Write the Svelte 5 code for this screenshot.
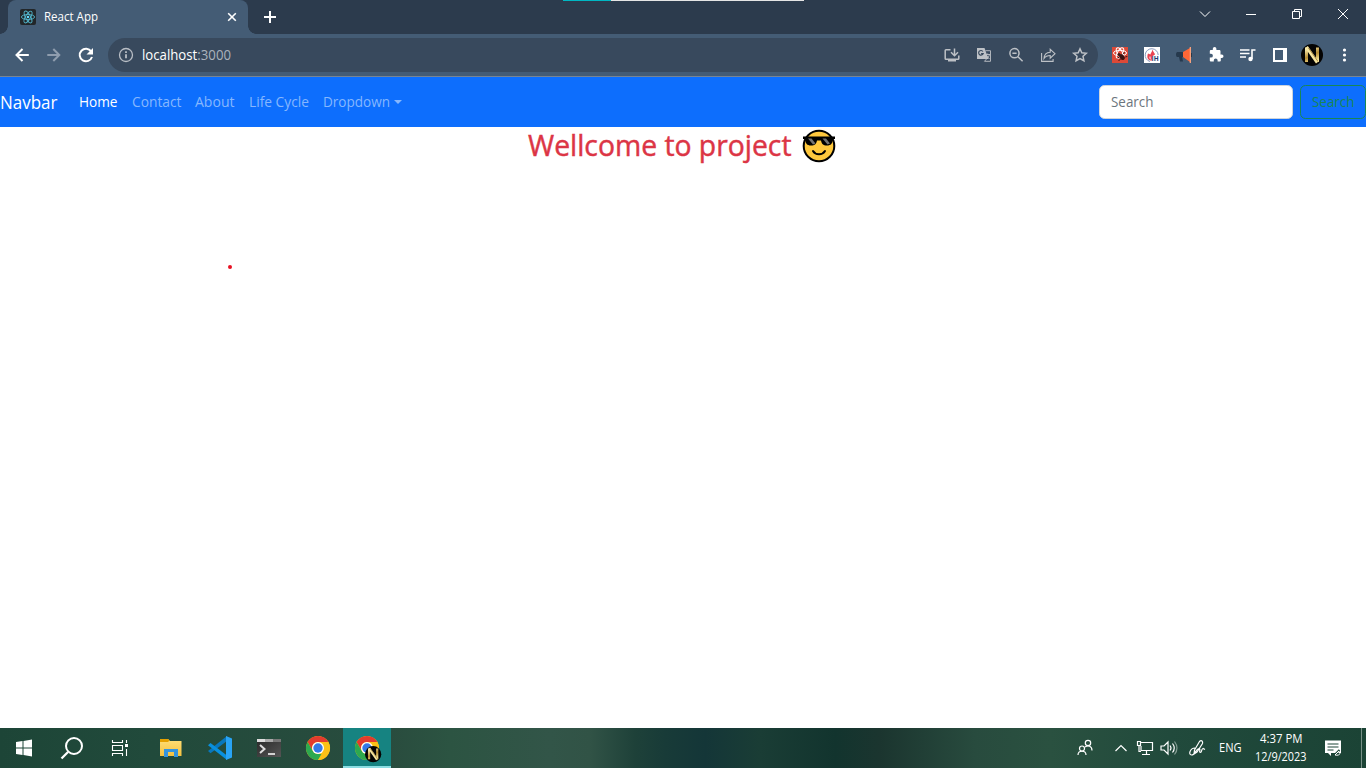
<script>
  const links = [
    { label: 'Home', width: 38.5, active: true },
    { label: 'Contact', width: 49.5 },
    { label: 'About', width: 39.5 },
    { label: 'Life Cycle', width: 60 },
    { label: 'Dropdown', width: 67, caret: true }
  ];
</script>

{#snippet label(text, width, size, base, weight = 400)}
  <svg class="label" {width} height={size * 1.5} aria-label={text}>
    <text x="0" y={base} textLength={width} lengthAdjust="spacingAndGlyphs" font-size={size} font-weight={weight}>{text}</text>
  </svg>
{/snippet}

{#snippet badge()}
  <circle cx="11" cy="11" r="11" fill="#050403" />
  <path d="M5.5 18V3.500M16.500 3.500V18" stroke="url(#gold)" stroke-width="3" />
  <path d="M5.500 3 16.300 18.500" stroke="#f7e5a0" stroke-width="3.200" />
  <path d="M7.500 4 17 17.500" stroke="#86621c" stroke-width=".7" />
{/snippet}

{#snippet chrome()}
  <circle cx="12" cy="12" r="12" fill="#fbc116" />
  <path d="M1.6 6A12 12 0 0 1 22.4 6H12a6 6 0 0 0-5.2 9z" fill="#e33b2e" />
  <path d="M1.6 6 6.8 15A6 6 0 0 0 12 18h5.2l-5.2 6A12 12 0 0 1 1.6 6z" fill="#2da94f" />
  <path d="M12 24 17.2 15A6 6 0 0 0 17.2 9L22.4 6A12 12 0 0 1 12 24z" fill="#fbc116" />
  <circle cx="12" cy="12" r="6" fill="#fff" />
  <circle cx="12" cy="12" r="4.7" fill="#3479e7" />
{/snippet}

<svg class="defs" width="0" height="0">
  <defs>
    <linearGradient id="gold" gradientUnits="userSpaceOnUse" x1="5" x2="12" y1="4" y2="19">
      <stop offset="0" stop-color="#fff5bb" /><stop offset=".55" stop-color="#b58a30" /><stop offset="1" stop-color="#fff0a2" />
    </linearGradient>
    <linearGradient id="folder" x2="0" y2="1"><stop stop-color="#ffdf78" /><stop offset="1" stop-color="#f5c13f" /></linearGradient>
    <linearGradient id="term" x2="1" y2="1"><stop stop-color="#292929" /><stop offset="1" stop-color="#555" /></linearGradient>
  </defs>
</svg>

<div class="screen">
  <header class="titlebar">
    <div class="tab">
      <svg class="react" width="16" height="16" viewBox="0 0 16 16">
        <rect width="16" height="16" rx="2" fill="#222629" />
        <g fill="none" stroke="#52b5cb" stroke-width=".9">
          <ellipse cx="8" cy="8" rx="6.6" ry="2.5" />
          <ellipse cx="8" cy="8" rx="6.6" ry="2.5" transform="rotate(60 8 8)" />
          <ellipse cx="8" cy="8" rx="6.6" ry="2.5" transform="rotate(120 8 8)" />
        </g>
        <circle cx="8" cy="8" r="1.3" fill="#61dafb" />
      </svg>
      {@render label('React App', 54, 12, 13)}
      <svg class="close" width="16" height="16" viewBox="0 0 16 16"><path d="m4.2 4.2 7.6 7.6m0-7.6-7.6 7.6" stroke="#fff" stroke-width="1.6" /></svg>
    </div>
    <svg class="plus" width="44" height="34" viewBox="0 0 44 34"><path d="M22 11v12M16 17h12" stroke="#fff" stroke-width="2" /></svg>
    <div class="window">
      <svg viewBox="0 0 46 28"><path d="m18 11.5 5 5 5-5" /></svg>
      <svg viewBox="0 0 46 28"><path d="M18 14.5h10" /></svg>
      <svg viewBox="0 0 46 28"><path d="M18.5 11.5h7v7h-7zM20.5 11.5v-2h7v7h-2" /></svg>
      <svg viewBox="0 0 46 28"><path d="m18 9 10 10m0-10L18 19" /></svg>
    </div>
    <div class="progress"></div>
  </header>

  <div class="toolbar">
    <div class="history">
      <svg viewBox="0 0 32 32"><path d="M22.8 16H10.5m6-6-6 6 6 6" stroke="#fff" stroke-width="2" /></svg>
      <svg viewBox="0 0 32 32"><path d="M9.3 16h12m-6-6 6 6-6 6" stroke="#8f9dae" stroke-width="2" /></svg>
      <svg viewBox="0 0 32 32"><path d="M21.2 12.4A6.3 6.3 0 1 0 22 18" stroke="#fff" stroke-width="2" /><path d="M23 9v6.5h-6.5z" fill="#fff" /></svg>
    </div>
    <div class="address">
      <svg class="info" width="16" height="16" viewBox="0 0 16 16"><circle cx="8" cy="8" r="6.5" fill="none" stroke="#b9bec5" stroke-width="1.3" /><path d="M8 7.3v4M8 4.3v1.6" stroke="#c9cdd2" stroke-width="1.6" /></svg>
      <svg class="label" width="89" height="22" aria-label="localhost:3000"><text x="0" y="16" font-size="14" textLength="89" lengthAdjust="spacingAndGlyphs">localhost<tspan fill="#aab2bc">:3000</tspan></text></svg>
      <div class="actions">
        <svg viewBox="0 0 32 32"><path d="M14.5 10.7H10q-.8 0-.8.8v8q0 .8.8.8h12q.8 0 .8-.8v-3M18.5 9.5v7m-3.5-3.3 3.5 3.5 3.5-3.5" /><path d="M12 20h8v2.5h-8z" fill="#bdc1c6" stroke="none" /></svg>
        <svg viewBox="0 0 32 32"><path d="M9 9h7.500l4 11H9z" fill="#bdc1c6" stroke="none" /><path d="M17.500 11.700h5v10.600h-6l2-2.300M17.500 15.500h4.500m-2.300-1v1M21.500 15.500c-.5 2-1.500 3-2.500 4m-.2-2.500 2.700 3" stroke-width=".9" /><path d="M14.900 12.500a2.300 2.300 0 1 0 .2 2.200h-2" stroke="#38495d" stroke-width="1.200" /></svg>
        <svg viewBox="0 0 32 32"><circle cx="14.5" cy="14.2" r="4.6" /><path d="m18 17.7 4.6 4.6M12.4 14.2h4.2" /></svg>
        <svg viewBox="0 0 32 32"><path d="M9.600 14v8.400h11.500v-2.500M12 19.500c.3-4 2.700-6 6.200-6.200v-3l4.800 4.400-4.800 4.500v-2.700c-2.800 0-4.700.8-6.200 3z" stroke-width="1.1" /></svg>
        <svg viewBox="0 0 32 32"><path d="m16 9.8 1.8 4 4.5.5-3.3 3 .9 4.4-3.9-2.2-3.9 2.2.9-4.4-3.3-3 4.5-.5z" /></svg>
      </div>
    </div>
    <div class="extensions">
      <svg viewBox="0 0 32 32"><path d="M8 8h16v16H8z" fill="#dc4937" /><g fill="none" stroke="#fff" stroke-width="1"><ellipse cx="16" cy="14" rx="6.500" ry="2.700" /><ellipse cx="16" cy="14" rx="5.800" ry="2.500" transform="rotate(60 16 14)" /><ellipse cx="16" cy="14" rx="5.800" ry="2.500" transform="rotate(120 16 14)" /></g><circle cx="15" cy="15.500" r="1.500" fill="#3b1715" /><ellipse cx="18" cy="18" rx="2.300" ry="3.300" fill="#381312" transform="rotate(-40 18 18)" /><path d="m13.500 19 2-1m-1 4 2-2m3-5 .8-2m1 5 2-.5" stroke="#381312" /></svg>
      <svg viewBox="0 0 32 32"><path d="M8 8h16v16H8z" fill="#fff" /><path d="M14 22.500a6.500 6.500 0 1 1 8.200-6.500" fill="none" stroke="#8899bd" stroke-width="1" /><path d="M16.500 10.500c-.5 3-2 3.500-2 5l-2.500-1c-2 5 1 7.500 4 7v-4l3-2c-.4-2-2-2.500-2.500-5z" fill="#ea4350" /><path d="M14 17.500q-.5 2 1 3" stroke="#fff" fill="none" /><text x="15.500" y="22" font-size="6.500" font-weight="700" fill="#213a71">IH</text></svg>
      <svg viewBox="0 0 32 32"><path d="M9 13h6.500v5h-1.300l.8 4.500h-3l-1-4.500H9q-1-.5-1-2.500t1-2.500z" fill="#26394d" /><path d="m15 13 7-4v14l-7-5z" fill="#ff6737" /><path d="M21.700 8h1.300v16h-1.300z" fill="#f6a17d" /><path d="M23.500 14v4" stroke="#29394a" /></svg>
      <svg viewBox="0 0 32 32"><path d="M20.7 15.3h-1.2V12c0-.8-.6-1.3-1.3-1.3h-2.8V9.500a1.800 1.800 0 0 0-3.600 0v1.200h-2q-1 0-1 1v2.800H10a1.900 1.900 0 0 1 0 3.800H8.800v3q0 1 1 1h3V21a1.900 1.900 0 0 1 3.800 0v1.300h2.200q1 0 1-1v-2.600h1a1.700 1.700 0 0 0 0-3.400z" fill="#fff" transform="translate(1 .3)" /></svg>
      <svg viewBox="0 0 32 32"><path d="M8 11h9.500M8 14.500h9.500M8 18h6M20 20v-9h3.500" fill="none" stroke="#fff" stroke-width="1.600" /><circle cx="18.500" cy="20" r="2.200" fill="#fff" /></svg>
      <svg viewBox="0 0 32 32"><path d="M9 9h14v14H9zM11 11v10h8V11z" fill="#fff" fill-rule="evenodd" /></svg>
      <svg viewBox="0 0 32 32"><g transform="translate(5 5)">{@render badge()}</g></svg>
      <svg viewBox="0 0 32 32"><circle cx="16.500" cy="11" r="1.600" fill="#fff" /><circle cx="16.500" cy="16" r="1.600" fill="#fff" /><circle cx="16.500" cy="21" r="1.600" fill="#fff" /></svg>
    </div>
  </div>

  <nav>
    <div class="brand">{@render label('Navbar', 57.5, 18, 20)}</div>
    <div class="links">
      {#each links as item}
        <div class="link" class:active={item.active}>
          {@render label(item.label, item.width, 14, 15.4)}
          {#if item.caret}<span class="caret"></span>{/if}
        </div>
      {/each}
    </div>
    <div class="field">{@render label('Search', 42.5, 14, 15.4)}</div>
    <div class="button">{@render label('Search', 42.5, 14, 15.4)}</div>
  </nav>

  <main>
    <h1>
      {@render label('Wellcome to project', 263.5, 28.8, 29, 500)}
      <svg class="emoji" width="34" height="34" viewBox="0 0 34 34">
        <circle cx="17" cy="17" r="15.300" fill="#ffc83d" stroke="#000" stroke-width="2" />
        <path d="M1 7.500h32v2.500h-2c-.5 4.500-2 6.500-6 6.500-4 0-5.500-2-6-5h-4c-.5 3-2 5-6 5S3.500 14.500 3 10H1z" fill="#000" />
        <path d="M6 9.500h3.500l4 5-2.500 1zM20.500 9.500H24l4 5-2.500 1z" fill="#737373" />
        <path d="M11 22c2.500 4.300 9.500 4.300 12 0" fill="none" stroke="#000" stroke-width="2" stroke-linecap="round" />
      </svg>
    </h1>
    <i class="dot"></i>
  </main>

  <footer>
    <div class="apps">
      <svg viewBox="0 0 48 40"><path d="m16 14 6.500-1v6.500H16zM23.500 12.900l8.500-1.300v7.900h-8.500zM16 20.500h6.500V27L16 26zM23.500 20.500H32v7.900l-8.500-1.300z" fill="#fff" /></svg>
      <svg viewBox="0 0 48 40"><circle cx="26" cy="18" r="8" fill="none" stroke="#fff" stroke-width="2" /><path d="m20 24-6.500 6.500" stroke="#fff" stroke-width="2.300" /></svg>
      <svg viewBox="0 0 48 40"><path d="M16.500 12v2.500h10V12M16.500 28v-2.500h10V28M16.500 17.500h10v5h-10zM30.500 12v3m0 6v7" fill="none" stroke="#fff" stroke-width="1.100" /><path d="M29 16h3v3h-3z" fill="#fff" /></svg>
      <svg class="explorer" viewBox="0 0 48 40"><path d="M13 11h8l2 2h11.500v15H13z" fill="url(#folder)" /><path d="M13 11h8l1.500 1.500-1.500 1.500h-8z" fill="#e5a100" /><path d="M17 29v-8h14v8h-4v-5h-6v5z" fill="#3594dd" /></svg>
      <svg viewBox="0 0 48 40"><path d="m12 23 2.500 2.300L31 13V8z" fill="#0877bd" /><path d="M12 17.200 14.500 15 31 27.500V32z" fill="#0990df" /><path d="m30 8 6 2.500v19L30 32z" fill="#29a4f5" /></svg>
      <svg viewBox="0 0 48 40"><path d="M12 11h24v18H12z" fill="url(#term)" /><path d="M12 11h8v3h-8z" fill="#ddd" /><path d="M20 11h8v3h-8z" fill="#aaa" /><path d="M28 11h8v3h-8z" fill="#777" /><path d="m15 17 4.500 4-4.500 4" fill="none" stroke="#ddd" stroke-width="2" /><path d="M23 26h7" stroke="#fff" stroke-width="1.500" /></svg>
      <svg viewBox="0 0 48 40"><g transform="translate(12 8)">{@render chrome()}</g></svg>
      <svg class="current" viewBox="0 0 48 38"><g transform="translate(12 8)">{@render chrome()}</g><g transform="translate(22 18) scale(.74)">{@render badge()}</g></svg>
    </div>
    <div class="tray">
      <svg width="24" height="24" viewBox="0 0 24 24"><circle cx="15" cy="7" r="2.700" /><circle cx="9" cy="12.500" r="2.500" /><path d="M5 19c0-5 8-5 8 0M12 11c3-2 7-1 7 3.500" /></svg>
      <svg class="up" width="24" height="24" viewBox="0 0 24 24"><path d="m6.500 15 5.500-5.500 5.500 5.500" /></svg>
      <svg width="24" height="24" viewBox="0 0 24 24"><path d="M8 6.500h11.500v8H8V10M13.500 14.500v4M9 18.500h8M4.500 5.500h3v4h-3zM6 9.500v6h2" /></svg>
      <svg width="24" height="24" viewBox="0 0 24 24"><path d="M4 10v4h3l4 4V6l-4 4zM13 9.500q2 2.500 0 5M15.500 7.500q3.500 4.500 0 9" /><path d="M17.500 5.500q5 6.500 0 13" stroke="#829b91" /></svg>
      <svg class="pen" width="24" height="24" viewBox="0 0 24 24"><path d="m9.500 14 5-8.500q1.500-1.500 2.500-.5t.5 2.500L12 16l-3 2zM10 12c-5 0-7 7-3.500 7 4 0 4-6 7.500-6.500 2 0-.5 4 1.500 4 1.500 0 .5-3.500 2.500-4l2 1" /></svg>
      <div class="lang">{@render label('ENG', 22.5, 12, 13)}</div>
      <div class="clock">{@render label('4:37 PM', 42.5, 12, 13)}{@render label('12/9/2023', 51.5, 12, 13)}</div>
      <svg class="notice" width="18" height="18" viewBox="0 0 18 18"><path d="M1 1.500h16v12.500H7v3l-3-3H1z" fill="#fff" stroke="none" /><path d="M3.500 5h11M3.500 8h11M3.500 11h6" stroke="#1e4638" /><path d="m11 15.500 4.500-4.500" stroke="#234b3c" stroke-width="2" /><path d="m11 16 4-4m-4 4c3 1 6-1 4.500-2" stroke="#fff" stroke-width="1" /></svg>
    </div>
  </footer>
</div>

<style>
  :global(body) { margin: 0; overflow: hidden; }
  * { box-sizing: border-box; }
  svg { display: block; flex: none; }
  .defs { position: absolute; }
  .screen { width: 1366px; height: 768px; display: flex; flex-direction: column; font-family: "Open Sans", "Noto Sans", sans-serif; background: #fff; color: #fff; }
  .label { fill: currentColor; overflow: visible; }
  .titlebar { position: relative; height: 34px; flex: none; display: flex; background: #2c3b4d; }
  .tab { position: relative; width: 240px; margin-left: 8px; border-radius: 8px 8px 0 0; background: #445c75; display: flex; align-items: center; padding: 0 8px 0 12px; }
  .tab::before, .tab::after { content: ""; position: absolute; bottom: 0; width: 8px; height: 8px; }
  .tab::before { left: -8px; background: radial-gradient(circle at 0 0, transparent 7.5px, #445c75 8px); }
  .tab::after { right: -8px; background: radial-gradient(circle at 100% 0, transparent 7.5px, #445c75 8px); }
  .react { margin-right: 8px; }
  .close { margin-left: auto; }
  .window { display: flex; margin-left: auto; }
  .window svg { width: 46px; height: 28px; fill: none; stroke: #fff; stroke-width: 1; }
  .progress { position: absolute; left: 563px; top: 0; width: 241px; height: 1px; background: linear-gradient(90deg, #00b7c3 48px, #e5e5e5 48px); }
  .toolbar { height: 43px; flex: none; display: flex; align-items: center; padding: 0 6px; background: #445c75; border-bottom: 1px solid #778593; }
  .history, .extensions, .actions { display: flex; }
  .history svg, .extensions svg, .actions svg { width: 32px; height: 32px; }
  .history svg { fill: none; }
  .history { margin-right: 6px; }
  .address { width: 990px; height: 34px; border-radius: 17px; background: #38495d; display: flex; align-items: center; padding: 0 2px 0 10px; }
  .info { margin-right: 8px; }
  .actions { margin-left: auto; }
  .actions svg { fill: none; stroke: #bdc1c6; stroke-width: 1.5; }
  .extensions { margin-left: 6px; }
  nav { height: 50px; flex: none; display: flex; align-items: center; background: #0d6efd; }
  .brand { width: 79px; }
  .links { display: flex; gap: 14.2px; }
  .link { display: flex; align-items: center; color: #86b7fe; }
  .link.active { color: #fff; }
  .caret { margin-left: 3.5px; border: 4.3px solid transparent; border-top-color: currentColor; border-bottom: 0; }
  .field { width: 194px; height: 34px; margin-left: auto; padding-left: 10.8px; border: 1px solid #ced4da; border-radius: 5.5px; display: flex; align-items: center; background: #fff; color: #6c757d; }
  .button { width: 66px; height: 34px; margin-left: 7px; border: 1px solid #198754; border-radius: 5.5px; display: flex; align-items: center; justify-content: center; color: #198754; }
  main { position: relative; flex: 1; }
  h1 { height: 40px; margin: 0; padding-left: 527.5px; display: flex; align-items: flex-start; gap: 11px; color: #dc3545; }
  h1 .label { stroke: currentColor; stroke-width: .45px; }
  .emoji { margin-top: 2px; }
  .dot { position: absolute; left: 228px; top: 138px; width: 4px; height: 4px; border-radius: 50%; background: #e81123; }
  footer { height: 40px; flex: none; display: flex; background: linear-gradient(90deg, #1d4537 0, #214a3b 150px, #294c3e 390px, #2c5442 450px, #325548 550px, #315346 590px, #1e4139 635px, #183b38 665px, #143638 705px, #1a3d35 760px, #12342e 835px, #1b352f 880px, #284b3e 975px, #2a5140 1050px, #214a3c 1170px, #1b4335 1366px); }
  .apps, .tray { display: flex; align-items: center; }
  .apps { gap: 1px; }
  .apps svg { width: 48px; height: 40px; }
  .apps svg:nth-child(2), .apps svg:nth-child(3) { margin-left: -1px; }
  .apps .explorer { margin-left: 2px; }
  .current { background: #168381; border-bottom: 2px solid #8bdde2; }
  .tray { margin-left: auto; padding-right: 4px; border-right: 1px solid #789087; margin-right: 4px; }
  .tray > svg { fill: none; stroke: #fff; stroke-width: 1.2; }
  .up { margin-left: 12px; }
  .pen { margin-left: 4px; }
  .lang { margin-left: 10px; width: 36px; }
  .clock { width: 52px; display: flex; flex-direction: column; align-items: center; }
  .tray .notice { margin: 0 15px 0 17px; }
</style>
